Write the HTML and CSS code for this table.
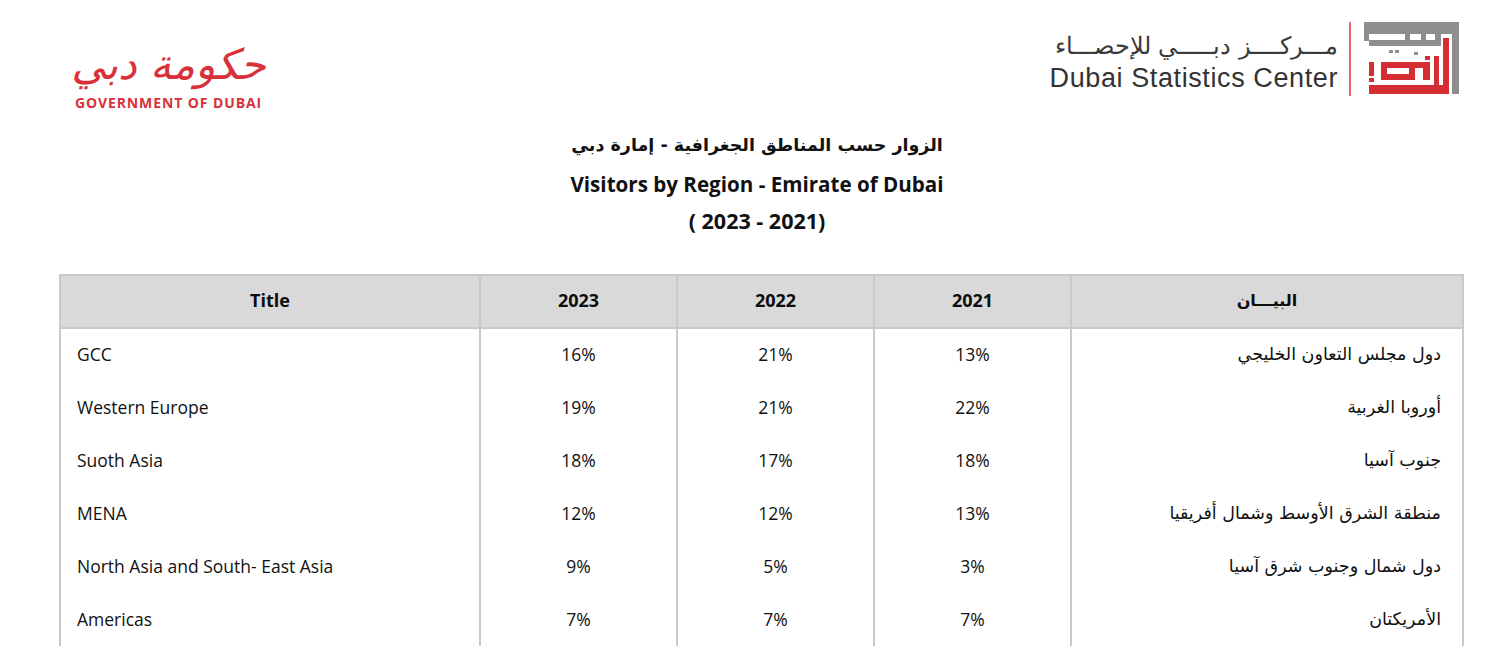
FILE: index.html
```html
<!DOCTYPE html>
<html lang="en">
<head>
<meta charset="utf-8">
<title>Visitors by Region - Emirate of Dubai</title>
<link rel="stylesheet" href="styles.css">
</head>
<body>
<header class="top">
  <div class="gov">
    <div class="gov-ar" lang="ar" dir="rtl">حكومة دبي</div>
    <div class="gov-en">GOVERNMENT OF DUBAI</div>
  </div>
  <div class="dsc">
    <div class="dsc-text">
      <div class="dsc-ar" lang="ar" dir="rtl">مـــركــــز دبـــــي للإحصـــاء</div>
      <div class="dsc-en">Dubai Statistics Center</div>
    </div>
    <div class="dsc-rule"></div>
    <svg class="dsc-mark" width="96" height="72" viewBox="5 4 96 72">
      <rect x="5" y="4" width="95" height="12" fill="#8e8e8e"/>
      <rect x="93" y="4" width="7" height="72" fill="#8e8e8e"/>
      <rect x="5" y="16" width="5" height="7" fill="#8e8e8e"/>
      <rect x="10" y="22" width="72" height="6" fill="#8e8e8e"/>
      <rect x="46" y="16" width="5" height="8" fill="#8e8e8e"/>
      <rect x="62" y="16" width="5" height="8" fill="#8e8e8e"/>
      <rect x="76" y="16" width="6" height="12" fill="#8e8e8e"/>
      <rect x="30" y="32" width="4" height="3" fill="#8e8e8e"/>
      <rect x="36" y="32" width="4" height="3" fill="#8e8e8e"/>
      <rect x="55" y="34" width="4" height="3" fill="#8e8e8e"/>
      <rect x="84" y="20" width="6" height="56" fill="#d62d35"/>
      <rect x="75" y="38" width="5" height="38" fill="#d62d35"/>
      <rect x="10" y="67" width="80" height="9" fill="#d62d35"/>
      <path d="M22 44 H71 V62 H64 V50 H56 V62 H22 Z" fill="#d62d35"/>
      <rect x="28" y="50" width="22" height="6" fill="#ffffff"/>
      <rect x="10" y="44" width="5" height="14" fill="#d62d35"/>
      <rect x="10" y="60" width="5" height="4" fill="#d62d35"/>
      <rect x="66" y="38" width="5" height="4" fill="#d62d35"/>
    </svg>
  </div>
</header>

<section class="titles">
  <h1 class="t-ar" lang="ar" dir="rtl">الزوار حسب المناطق الجغرافية - إمارة دبي</h1>
  <h2 class="t-en">Visitors by Region - Emirate of Dubai</h2>
  <h3 class="t-yr">( 2023 - 2021)</h3>
</section>

<table class="data">
  <colgroup>
    <col class="c-title"><col class="c-yr"><col class="c-yr"><col class="c-yr"><col class="c-ar">
  </colgroup>
  <thead>
    <tr><th>Title</th><th>2023</th><th>2022</th><th>2021</th><th class="th-ar" lang="ar" dir="rtl">البيـــان</th></tr>
  </thead>
  <tbody>
    <tr><td class="en">GCC</td><td>16%</td><td>21%</td><td>13%</td><td class="ar" dir="rtl">دول مجلس التعاون الخليجي</td></tr>
    <tr><td class="en">Western Europe</td><td>19%</td><td>21%</td><td>22%</td><td class="ar" dir="rtl">أوروبا الغربية</td></tr>
    <tr><td class="en">Suoth Asia</td><td>18%</td><td>17%</td><td>18%</td><td class="ar" dir="rtl">جنوب آسيا</td></tr>
    <tr><td class="en">MENA</td><td>12%</td><td>12%</td><td>13%</td><td class="ar" dir="rtl">منطقة الشرق الأوسط وشمال أفريقيا</td></tr>
    <tr><td class="en">North Asia and South- East Asia</td><td>9%</td><td>5%</td><td>3%</td><td class="ar" dir="rtl">دول شمال وجنوب شرق آسيا</td></tr>
    <tr><td class="en">Americas</td><td>7%</td><td>7%</td><td>7%</td><td class="ar" dir="rtl">الأمريكتان</td></tr>
  </tbody>
</table>
</body>
</html>
```

FILE: styles.css
```css
html, body {
  margin: 0;
  padding: 0;
  background: #ffffff;
}
body {
  font-family: "Open Sans", "Noto Sans", "DejaVu Sans", sans-serif;
  color: #1a1a1a;
  width: 1500px;
  overflow: hidden;
}
.top {
  display: flex;
  justify-content: space-between;
  align-items: flex-start;
  padding: 22px 40px 0 73px;
  height: 100px;
  box-sizing: border-box;
}
.gov {
  display: flex;
  flex-direction: column;
  align-items: center;
  width: 191px;
  padding-top: 16px;
}
.gov-ar {
  font-family: "DejaVu Sans", "Noto Sans", serif;
  font-style: italic;
  font-weight: 300;
  color: #d8313a;
  font-size: 42px;
  line-height: 54px;
  white-space: nowrap;
}
.gov-en {
  font-family: "Open Sans", "Liberation Sans", sans-serif;
  font-weight: 700;
  color: #d8313a;
  font-size: 14px;
  letter-spacing: 0.9px;
  line-height: 16px;
  margin-top: 3px;
  white-space: nowrap;
}
.dsc {
  display: flex;
  align-items: flex-start;
}
.dsc-text {
  display: flex;
  flex-direction: column;
  align-items: flex-end;
  padding-top: 8px;
}
.dsc-ar {
  font-family: "DejaVu Sans", sans-serif;
  font-size: 24px;
  line-height: 32px;
  color: #3a3a3a;
  font-weight: 300;
}
.dsc-en {
  font-family: "Liberation Sans", Arial, sans-serif;
  font-size: 27px;
  line-height: 32px;
  color: #333333;
  letter-spacing: 0.6px;
}
.dsc-rule {
  width: 2px;
  height: 74px;
  background: #e06a70;
  margin: 0 13px 0 11px;
}
.dsc-mark {
  display: block;
}
.titles {
  text-align: center;
  margin-top: 26px;
  padding-left: 14px;
}
.titles h1, .titles h2, .titles h3 {
  margin: 0;
  font-weight: 700;
  color: #111;
}
.t-ar {
  font-family: "DejaVu Sans", "Noto Sans", sans-serif;
  font-size: 17.5px;
  line-height: 38px;
}
.t-en {
  font-size: 20.6px;
  line-height: 40px;
}
.t-yr {
  font-size: 21.5px;
  line-height: 34px;
}
.data {
  margin: 36px 0 0 59px;
  width: 1403px;
  border-collapse: collapse;
  table-layout: fixed;
  font-size: 17.5px;
}
.c-title { width: 420px; }
.c-yr { width: 197px; }
.c-ar { width: 392px; }
.data th, .data td {
  border: 2px solid #c9c9c9;
  border-top: none;
  border-bottom: none;
  text-align: center;
  font-weight: 500;
  color: #111;
}
.data td {
  height: 49px;
  padding: 0 0 4px 0;
}
.data thead th {
  background: #d9d9d9;
  font-weight: 700;
  font-size: 18px;
  color: #0d0d0d;
  border-top: 2px solid #c9c9c9;
  border-bottom: 2px solid #c9c9c9;
  height: 53px;
  padding: 0 0 3px 0;
  box-sizing: border-box;
}
.data td.en {
  text-align: left;
  padding-left: 16px;
}
.data td.ar {
  text-align: right;
  padding-right: 21px;
  font-family: "DejaVu Sans", "Noto Sans", sans-serif;
  font-size: 17.5px;
}
.data th.th-ar {
  font-family: "DejaVu Sans", "Noto Sans", sans-serif;
  font-size: 16px;
}
```
